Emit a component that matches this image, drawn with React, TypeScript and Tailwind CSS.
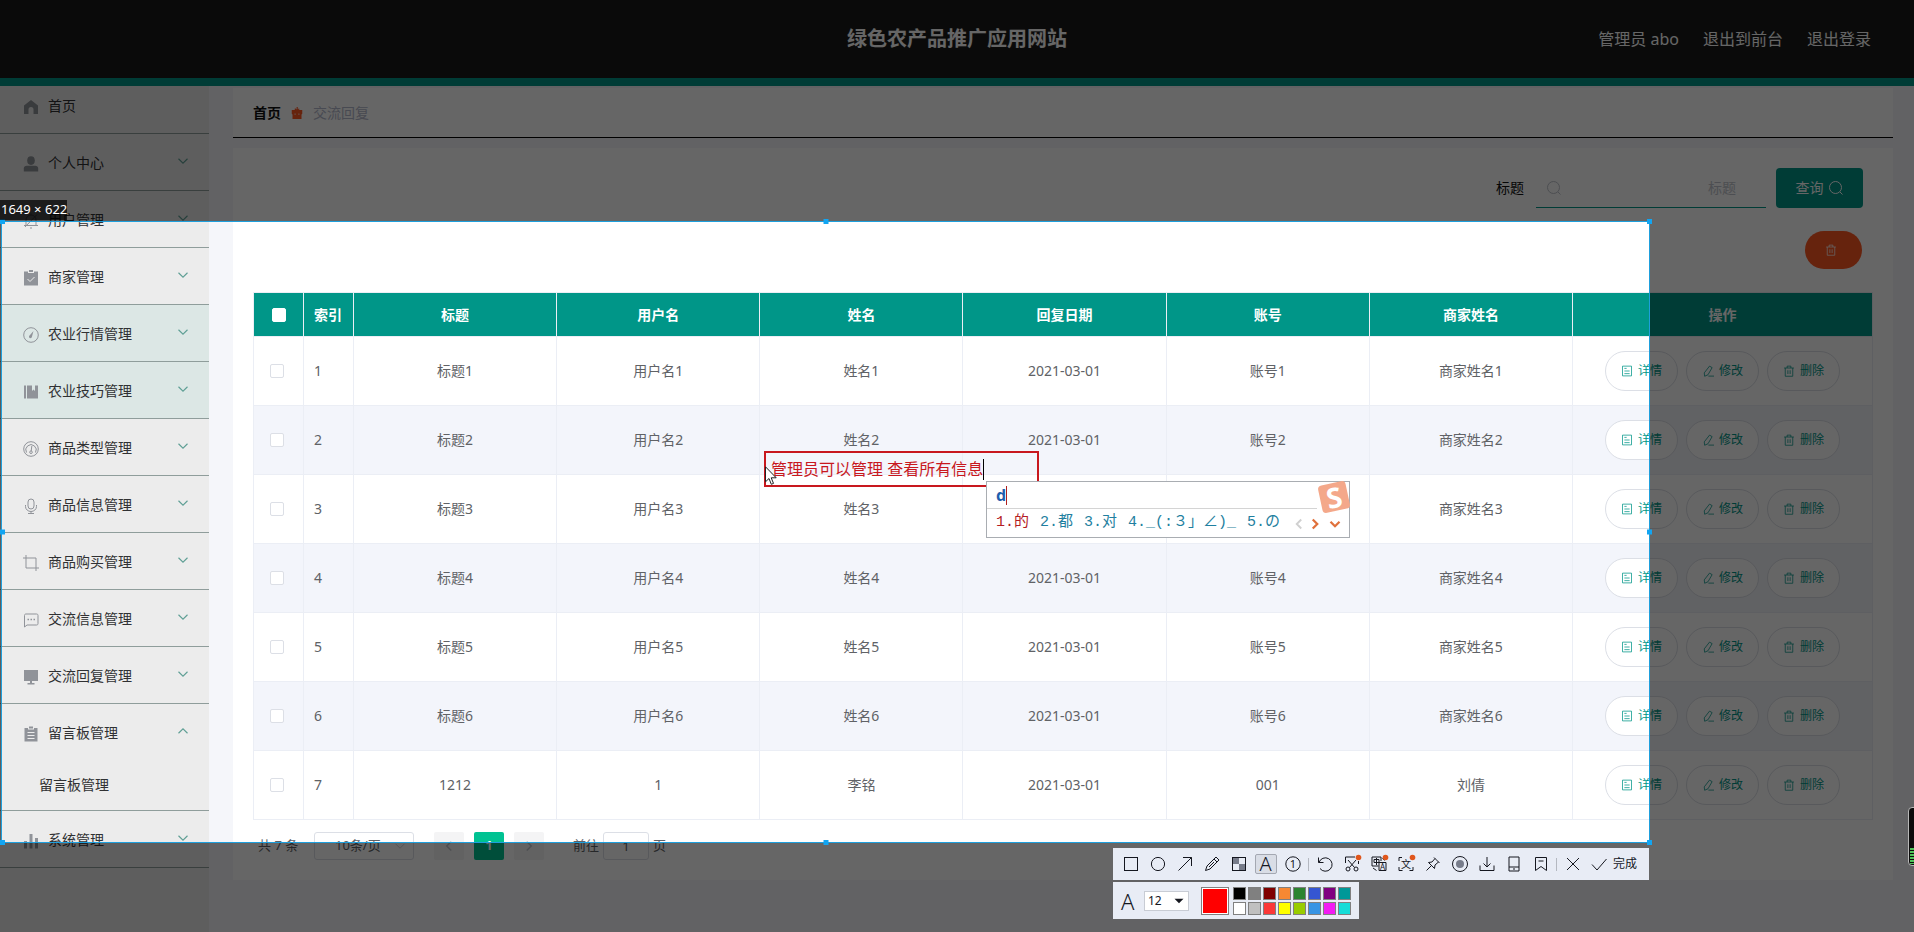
import type { ReactNode } from 'react';
import clsx from 'clsx';

type MenuItem = { label: string; icon: ReactNode; active?: boolean; children?: string[]; leaf?: boolean };

const Icon = ({ children, className = 'w-4 h-4' }: { children: ReactNode; className?: string }) => (
  <svg viewBox="0 0 16 16" fill="none" stroke="currentColor" className={clsx('shrink-0', className)} aria-hidden="true">
    {children}
  </svg>
);

const menu: MenuItem[] = [
  { label: '首页', leaf: true, icon: <path d="M8 1 1 6.500V15h4.500v-4.500a2.500 2.500 0 0 1 5 0V15H15V6.500z" fill="currentColor" stroke="none" /> },
  { label: '个人中心', icon: <g fill="currentColor" stroke="none"><ellipse cx="8" cy="4.600" rx="3.800" ry="4.300" /><path d="M.8 15.500v-3c0-1.800 1.200-2.700 3-2.700h8.400c1.800 0 3 .9 3 2.700v3z" /></g> },
  { label: '用户管理', icon: <path d="M3 12V7a5 5 0 0 1 10 0v5M1 12.500h14M7 15h2M2 14 14 1.500M8 2V.5" /> },
  { label: '商家管理', icon: <><path d="M1 1.500h4V3h6V1.500h4v14H1zM6 0h4v2H6z" fill="currentColor" stroke="none" /><path d="m4.500 9 2.500 2.500 4.500-4.500" stroke="#ececec" /></> },
  { label: '农业行情管理', active: true, icon: <><circle cx="8" cy="8" r="7.300" /><path d="M10.500 4 9 9.500a1.500 1.500 0 1 1-2.200-1.200z" fill="currentColor" stroke="none" /></> },
  { label: '农业技巧管理', active: true, icon: <path d="M1 1.500h2v13H1zM4 1.500h5V7l1.500-1.500L12 7V1.500h3v13H4z" fill="currentColor" stroke="none" /> },
  { label: '商品类型管理', icon: <><circle cx="8" cy="8" r="7.300" /><path d="M3.500 11.500a5.200 5.200 0 1 1 9 0M8.800 5l-.6 5" /><circle cx="8" cy="11.200" r="1.300" /></> },
  { label: '商品信息管理', icon: <><rect x="5" y="1" width="6" height="10" rx="3" /><path d="M2.500 7v1.500a5.500 5 0 0 0 11 0V7M8 13.500v2M5 15.500h6" /></> },
  { label: '商品购买管理', icon: <path d="M3 0v13h13M0 3h13v13" /> },
  { label: '交流信息管理', icon: <><path d="M1.500 15V3.500c0-1 .5-1.500 1.500-1.500h10.500c1 0 1.500.5 1.500 1.500v8c0 1-.5 1.500-1.500 1.500H4z" /><path d="M4.500 7.500h1.500M7.500 7.500H9M10.500 7.500H12" strokeWidth="1.500" /></> },
  { label: '交流回复管理', icon: <path d="M1 1h14v11H1zM7 12h2v2H7zM4.500 14h7v1.500h-7z" fill="currentColor" stroke="none" /> },
  { label: '留言板管理', children: ['留言板管理'], icon: <><path d="M1.500 2H5v1.500h6V2h3.500v13.500h-13zM6 .5h4v2H6z" fill="currentColor" stroke="none" /><path d="M4.500 6.500h7M4.500 9.500h7M4.500 12.500h7" stroke="#ececec" /></> },
  { label: '系统管理', icon: <path d="M1 8h3v7.500H1zM6.500 1h3v14.500h-3zM12 5h3v10.500h-3z" fill="currentColor" stroke="none" /> },
];

const rows = [
  ...[1, 2, 3, 4, 5, 6].map((n) => [`标题${n}`, `用户名${n}`, `姓名${n}`, '2021-03-01', `账号${n}`, `商家姓名${n}`]),
  ['1212', '1', '李铭', '2021-03-01', '001', '刘倩'],
];

const columns = ['标题', '用户名', '姓名', '回复日期', '账号', '商家姓名'];

const trash = <path d="M1.500 4h13M3 4v11h10V4M5.500 4V1.500h5V4M6.500 7v5M9.500 7v5" />;

const actions = [
  { label: '详情', icon: <path d="M2 1.500h12v13H2zM4.500 4.500h3M4.500 8h7M4.500 11.500h7" /> },
  { label: '修改', icon: <path d="m10 1.500 3.500 2-5.500 9.500-4.500 2-.5-4.500zM8.500 14.800H16" /> },
  { label: '删除', icon: trash },
];

const searchIcon = <><circle cx="7.500" cy="7.500" r="6" /><path d="m12 12 2.500 2.500" /></>;

const hot = <circle cx="14.500" cy="1.500" r="2.800" fill="#e0561c" stroke="none" />;

const drawTools = [
  { name: '矩形', icon: <rect x="1.500" y="1.500" width="13" height="13" /> },
  { name: '椭圆', icon: <circle cx="8" cy="8" r="6.600" /> },
  { name: '箭头', icon: <path d="M1.500 14.500 14.500 1.500M6 1.500h8.500V10" /> },
  { name: '画笔', icon: <path d="m1.500 14.500 1.500-4.500L12 1l3 3-9 9zM10 3l3 3M5 11l5-5" /> },
  { name: '马赛克', icon: <><path d="M2 2h6v6H2zM8 8h6v6H8z" fill="#777c8a" stroke="none" /><rect x="1.500" y="1.500" width="13" height="13" /></> },
  { name: '文字', text: 'A' },
  { name: '序号', icon: <><circle cx="8" cy="8" r="7.200" /><text x="8" y="12" textAnchor="middle" fontSize="11" fill="currentColor" stroke="none">1</text></> },
];

const editTools = [
  { name: '撤销', icon: <path d="M1.500 1.500v5h5M2 6.500A6.700 6.700 0 1 1 3 12.500" /> },
  { name: '截图', icon: <><path d="M1.500 7V1H11M14.500 5v3M4 4l6.500 7.500M12 4l-6.500 7.500" /><circle cx="4" cy="13" r="2" /><circle cx="12" cy="13" r="2" />{hot}</> },
  { name: '翻译', icon: <><path d="M7.500 10H1V1h9v4M8 6.500h7v8H8zM2 12l3.500 2.500M11.500 2l2 2.500M3 3.500h5v3H3zM5.500 2v7" /><text x="11.500" y="13.500" textAnchor="middle" fontSize="8" fill="currentColor" stroke="none">A</text>{hot}</> },
  { name: '识别文字', icon: <><path d="M1 5V1.500h3M1 11v3.500h3.500M15 11v3.500h-3.500" /><text x="8" y="11.500" textAnchor="middle" fontSize="10" fill="currentColor" stroke="none">文</text>{hot}</> },
  { name: '钉住', icon: <path d="m9 1.500 5.500 5.500M10 2.500 7 6 3.500 6.500l6 6L10 9l3.500-3M6.500 9.500l-5 5" /> },
  { name: '录屏', icon: <><circle cx="8" cy="8" r="7.500" /><circle cx="8" cy="8" r="4" fill="#777c8a" stroke="none" /></> },
  { name: '保存', icon: <path d="M8 1v10M4.500 7.500 8 11l3.500-3.500M1 9.500v5h14v-5" /> },
  { name: '发送到手机', icon: <path d="M3 1h10v14H3zM3 11h10M7 13h2" /> },
  { name: '收藏', icon: <path d="M2.500 1.500h11v13L8 10.500l-5.500 4zM5.500 5h5" /> },
];

// literal class names, so that the stylesheet contains them
const swatches = [
  'bg-black', 'bg-[#808080]', 'bg-[#800000]', 'bg-[#f78833]', 'bg-[#2c8430]', 'bg-[#3556d2]', 'bg-[#800080]', 'bg-[#009898]',
  'bg-white', 'bg-[#c0c0c0]', 'bg-[#fb3838]', 'bg-[#ffff00]', 'bg-[#99cc00]', 'bg-[#3894e4]', 'bg-[#f31bf3]', 'bg-[#16dcd8]',
];

const handles = [
  '-left-[2px] -top-[3px]', 'left-1/2 -translate-x-1/2 -top-[3px]', '-right-[3px] -top-[3px]',
  '-left-[2px] top-1/2 -translate-y-1/2', '-right-[3px] top-1/2 -translate-y-1/2',
  '-left-[2px] -bottom-[3px]', 'left-1/2 -translate-x-1/2 -bottom-[3px]', '-right-[3px] -bottom-[3px]',
];

function Header() {
  return (
    <header className="absolute inset-x-0 top-0 z-10 grid h-[86px] grid-cols-[1fr_auto_1fr] items-center border-b-8 border-[#009688] bg-[#1b1b1b] px-[43px] text-white">
      <h1 className="col-start-2 text-xl font-bold">绿色农产品推广应用网站</h1>
      <nav className="flex justify-end gap-6 text-base">
        <span>管理员 abo</span>
        <a href="#front">退出到前台</a>
        <a href="#logout">退出登录</a>
      </nav>
    </header>
  );
}

function Sidebar() {
  return (
    <aside className="w-[209px] shrink-0 bg-[#ececec] text-sm text-[#303133]">
      <ul>
        {menu.map((item) => (
          <li key={item.label} className={clsx('border-b border-[#8f9d9b]', item.active && 'bg-[#dce7e5]')}>
            <a href="#menu" className="flex h-14 items-center gap-[9px] pl-[23px] pr-5 pt-px">
              <Icon className="mt-[2px] h-4 w-4 text-[#909399]">{item.icon}</Icon>
              <span className="flex-1">{item.label}</span>
              {!item.leaf && (
                <Icon className="mb-1 h-3 w-3 text-[#5f9f95]">
                  <path d={item.children ? 'm2 11 6-6 6 6' : 'm2 5 6 6 6-6'} strokeWidth="1.500" />
                </Icon>
              )}
            </a>
            {item.children?.map((child) => (
              <a key={child} href="#child" className="flex h-[50px] items-center pl-[39px]">{child}</a>
            ))}
          </li>
        ))}
      </ul>
    </aside>
  );
}

function SearchBar() {
  return (
    <form className="mr-[10px] flex h-10 items-center justify-end gap-[10px] text-sm">
      <label htmlFor="title" className="text-[#101010]">标题</label>
      <div className="flex h-10 w-[232px] items-center pl-[2px]">
        <div className="flex h-full w-full items-center border-b border-[#009688] px-[10px] text-[#c0c4cc]">
          <Icon>{searchIcon}</Icon>
          <input id="title" placeholder="标题" className="min-w-0 flex-1 pr-5 text-right outline-none placeholder:text-[#c0c4cc]" />
        </div>
      </div>
      <button type="button" className="flex h-10 w-[87px] items-center justify-center gap-1 rounded bg-[#009688] text-white">
        查询
        <Icon>{searchIcon}</Icon>
      </button>
    </form>
  );
}

function DataTable() {
  const box = 'block h-[14px] w-[14px] appearance-none rounded-xs border bg-white';
  return (
    <table className="mt-[23px] w-full table-fixed border-separate border-spacing-0 border-l border-t border-[#ebeef5] text-center text-sm text-[#606266]">
      <colgroup>
        <col className="w-[50px]" />
        <col className="w-[50px]" />
        {columns.map((c) => <col key={c} />)}
        <col className="w-[300px]" />
      </colgroup>
      <thead>
        <tr className="h-11 bg-[#009688] text-white">
          <th className="border-b border-r border-[#ebeef5] pl-[18px]">
            <input type="checkbox" aria-label="全选" className={clsx(box, 'border-white')} />
          </th>
          <th className="border-b border-r border-[#ebeef5] pl-[10px] text-left">索引</th>
          {columns.map((c) => <th key={c} className="border-b border-r border-[#ebeef5]">{c}</th>)}
          <th className="border-b border-r border-[#ebeef5]">操作</th>
        </tr>
      </thead>
      <tbody>
        {rows.map((row, i) => (
          <tr key={i} className="h-[69px] even:bg-[#f3f5fb]">
            <td className="border-b border-r border-[#ebeef5] pl-4">
              <input type="checkbox" aria-label={`选择第${i + 1}行`} className={clsx(box, 'border-[#dcdfe6]')} />
            </td>
            <td className="border-b border-r border-[#ebeef5] pl-[10px] text-left">{i + 1}</td>
            {row.map((cell, j) => <td key={j} className="border-b border-r border-[#ebeef5]">{cell}</td>)}
            <td className="border-b border-r border-[#ebeef5]">
              <div className="flex justify-center gap-2">
                {actions.map((a) => (
                  <button key={a.label} type="button" className="flex h-10 w-[73px] items-center justify-center gap-[5px] rounded-full border border-[#dcdfe6] bg-white text-xs text-[#009688]">
                    <Icon className="h-3 w-3">{a.icon}</Icon>
                    {a.label}
                  </button>
                ))}
              </div>
            </td>
          </tr>
        ))}
      </tbody>
    </table>
  );
}

function Pagination() {
  const page = 'flex h-7 w-[30px] items-center justify-center rounded-xs';
  return (
    <div className="mt-3 flex h-7 items-center pl-[5px] text-[13px] text-[#606266]">
      <span className="w-14">共 7 条</span>
      <div className="relative">
        <select aria-label="每页条数" className="h-7 w-[100px] appearance-none rounded-[3px] border border-[#dcdfe6] pl-5 text-[13px]">
          <option>10条/页</option>
        </select>
        <Icon className="pointer-events-none absolute right-2 top-2 h-3 w-3 text-[#c0c4cc]"><path d="m2 5 6 6 6-6" /></Icon>
      </div>
      <div className="ml-5 flex gap-[10px]">
        <button type="button" aria-label="上一页" className={clsx(page, 'bg-[#f4f4f5] text-[#c0c4cc]')}><Icon className="h-3 w-3"><path d="m11 2-6 6 6 6" strokeWidth="2" /></Icon></button>
        <button type="button" className={clsx(page, 'bg-[#00c292] font-bold text-white')}>1</button>
        <button type="button" aria-label="下一页" className={clsx(page, 'bg-[#f4f4f5] text-[#c0c4cc]')}><Icon className="h-3 w-3"><path d="m5 2 6 6-6 6" strokeWidth="2" /></Icon></button>
      </div>
      <label className="ml-[29px] flex items-center gap-1">
        前往
        <input defaultValue="1" className="h-7 w-[46px] rounded-[3px] border border-[#dcdfe6] text-center" />
        页
      </label>
    </div>
  );
}

function ToolButton({ name, icon, text }: { name: string; icon?: ReactNode; text?: string }) {
  return (
    <button type="button" aria-label={name} className="flex h-8 w-[27px] items-center justify-center">
      {text ? (
        <span className="flex h-5 w-[22px] items-center justify-center rounded-xs border border-[#a4a8b2] bg-[#d9dde6] text-xl leading-none font-light">{text}</span>
      ) : (
        <Icon className="h-4 w-4 overflow-visible">{icon}</Icon>
      )}
    </button>
  );
}

function Toolbar() {
  return (
    <div className="absolute left-[1113px] top-[848px] flex flex-col items-start gap-[2px] text-[#15171f]">
      <div className="flex h-8 w-[536px] items-center bg-[#e8ecf5] pl-1">
        {drawTools.map((t) => <ToolButton key={t.name} {...t} />)}
        <i className="mx-[2px] h-[13px] w-px bg-[#b4b8c0]" />
        {editTools.map((t) => <ToolButton key={t.name} {...t} />)}
        <i className="mx-[2px] h-[13px] w-px bg-[#b4b8c0]" />
        <ToolButton name="取消" icon={<path d="m2 2 12 12M14 2 2 14" />} />
        <button type="button" className="flex items-center gap-[6px] pl-[5px] text-xs">
          <Icon><path d="m1 8.500 5 5.500L15.500 3" /></Icon>
          完成
        </button>
      </div>
      <div className="flex h-[37px] w-[246px] items-center bg-[#e8ecf5] pl-2 pr-2">
        <span className="w-[23px] text-[22px] leading-none font-light">A</span>
        <div className="relative">
          <select aria-label="字号" className="block h-5 w-[45px] appearance-none border border-[#c8ccd4] bg-white pl-[3px] text-xs">
            <option>12</option>
          </select>
          <Icon className="pointer-events-none absolute right-1 top-1 h-3 w-3"><path d="M2 5h12l-6 6z" fill="currentColor" stroke="none" /></Icon>
        </div>
        <button type="button" aria-label="当前颜色" className="ml-3 h-7 w-7 border border-[#808080] bg-[#ff0000] outline-1 -outline-offset-2 outline-white" />
        <div className="ml-1 grid grid-cols-8 gap-[2px]">
          {swatches.map((s) => <button key={s} type="button" aria-label="颜色" className={clsx('h-[13px] w-[13px] border border-[#808080]', s)} />)}
        </div>
      </div>
    </div>
  );
}

function InputMethod() {
  return (
    <div className="absolute left-[986px] top-[481px] h-[57px] w-[364px] border border-[#a9adb2] bg-white">
      <div className="mr-[32px] flex h-[27px] items-center border-b border-[#d4d4d4] pl-[9px] text-base font-bold text-[#1f5fae]">
        d<i className="h-[19px] w-px bg-[#b02020]" />
      </div>
      <ol className="flex h-[29px] items-center gap-[11px] pl-[9px] font-['Liberation_Mono','Noto_Sans_CJK_SC',monospace] text-[15px] text-[#1f7fa0]">
        <li className="text-[#b41c24]">1.的</li>
        <li>2.都</li>
        <li>3.对</li>
        <li className="whitespace-nowrap">4._(:３」∠)_</li>
        <li>5.の</li>
        <li className="ml-auto flex gap-1 pr-2">
          <Icon className="h-3 w-3 text-[#d0d0d0]"><path d="m11 2-6 6 6 6" strokeWidth="2.500" /></Icon>
          <Icon className="h-3 w-3 text-[#e0713c]"><path d="m5 2 6 6-6 6" strokeWidth="3" /></Icon>
          <Icon className="ml-1 h-3 w-3 text-[#e0713c]"><path d="m2 5 6 6 6-6" strokeWidth="3" /></Icon>
        </li>
      </ol>
      <div className="absolute right-px top-px flex h-7 w-7 -rotate-12 items-center justify-center rounded-sm bg-[#f4a88a] text-[28px] leading-none font-bold text-white">S</div>
    </div>
  );
}

// Screen capture layer that lies over the whole page
function CaptureLayer() {
  return (
    <div className="absolute inset-0 z-20 overflow-hidden">
      <div className="absolute left-px top-[221px] h-[622px] w-[1649px] border border-[#1e9fdc] shadow-[0_0_0_2000px_rgba(0,0,0,0.6)]">
        {handles.map((h) => <i key={h} className={clsx('absolute h-[5px] w-[5px] bg-[#12a5f2]', h)} />)}
      </div>
      <div className="absolute left-0 top-[200px] flex h-5 w-[67px] items-center bg-black/70 pl-px text-[13px] whitespace-nowrap text-white">1649 × 622</div>

      <div className="absolute left-[764px] top-[451px] flex h-9 w-[275px] items-center border-2 border-[#c8181e] pl-[5px] text-base whitespace-nowrap text-[#c8181e]">
        管理员可以管理 查看所有信息
        <i className="h-[21px] w-px bg-black" />
      </div>
      <svg className="absolute left-[765px] top-[466px] h-5 w-3" viewBox="0 0 12 20" aria-hidden="true">
        <path d="M.5.8v15l3.500-3.300 2.300 5.800 2.200-.9-2.300-5.600h5z" fill="#fff" stroke="#222" />
      </svg>
      <InputMethod />
      <Toolbar />

      <div className="absolute -right-1 top-[807px] flex h-[59px] w-[10px] items-end rounded border border-[#b8b8b8] bg-[#0c0c0c] p-px">
        <i className="h-4 w-full bg-[repeating-linear-gradient(#4fc35a_0_2px,#0c0c0c_2px_3px)]" />
      </div>
    </div>
  );
}

export default function App() {
  return (
    <div className="relative flex min-h-screen bg-[#f5f6fa] pt-[77px] font-['Noto_Sans','Noto_Sans_CJK_SC',sans-serif]">
      <Header />
      <Sidebar />
      <main className="min-w-0 flex-1 pb-6 pl-6 pr-[21px] pt-[11px]">
        <nav className="flex h-[50px] items-center border-b border-black bg-white pl-5 text-sm">
          <a href="#home" className="font-bold text-[#101010]">首页</a>
          <Icon className="mx-[10px] h-3 w-3 text-[#ff5722]">
            <path d="M1 4h4V2h1.500v1h1V0h1.500v3h1V2H11v2h4v5l-1 1v6H2v-6L1 9z" fill="currentColor" stroke="none" />
            <path d="M4.500 9.500h2M9.500 9.500h2" stroke="#fff" />
          </Icon>
          <span className="text-[#b4b8cc]">交流回复</span>
        </nav>
        <section className="mt-[10px] bg-white p-5">
          <SearchBar />
          <div className="mr-[11px] mt-[23px] flex justify-end">
            <button type="button" aria-label="删除" className="flex h-[38px] w-[57px] items-center rounded-full bg-[#ff5722] pl-5 text-white">
              <Icon className="h-3 w-3">{trash}</Icon>
            </button>
          </div>
          <DataTable />
          <Pagination />
        </section>
      </main>
      <CaptureLayer />
    </div>
  );
}
